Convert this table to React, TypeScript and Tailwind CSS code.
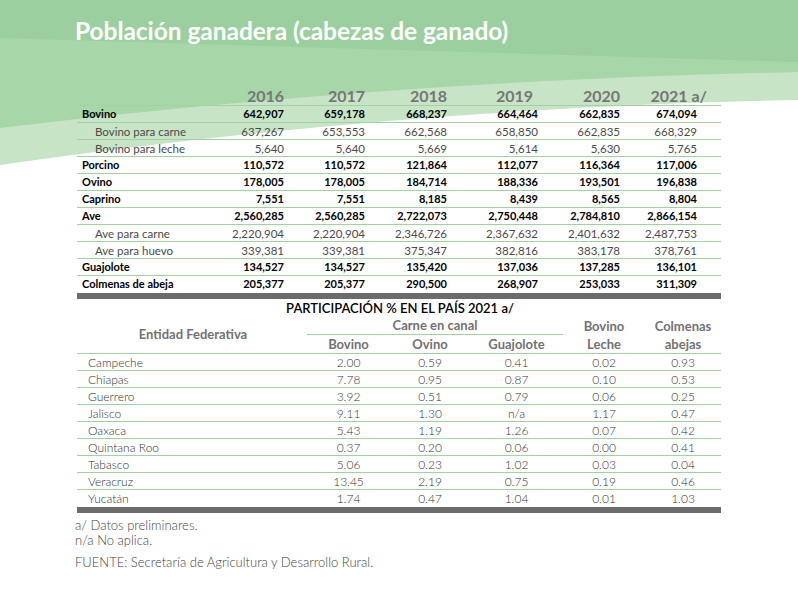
import React from 'react'

const YEARS = ['2016', '2017', '2018', '2019', '2020', '2021 a/']

type Row = { label: string; sub?: boolean; v: string[] }

const POB: Row[] = [
  { label: 'Bovino', v: ['642,907', '659,178', '668,237', '664,464', '662,835', '674,094'] },
  { label: 'Bovino para carne', sub: true, v: ['637,267', '653,553', '662,568', '658,850', '662,835', '668,329'] },
  { label: 'Bovino para leche', sub: true, v: ['5,640', '5,640', '5,669', '5,614', '5,630', '5,765'] },
  { label: 'Porcino', v: ['110,572', '110,572', '121,864', '112,077', '116,364', '117,006'] },
  { label: 'Ovino', v: ['178,005', '178,005', '184,714', '188,336', '193,501', '196,838'] },
  { label: 'Caprino', v: ['7,551', '7,551', '8,185', '8,439', '8,565', '8,804'] },
  { label: 'Ave', v: ['2,560,285', '2,560,285', '2,722,073', '2,750,448', '2,784,810', '2,866,154'] },
  { label: 'Ave para carne', sub: true, v: ['2,220,904', '2,220,904', '2,346,726', '2,367,632', '2,401,632', '2,487,753'] },
  { label: 'Ave para huevo', sub: true, v: ['339,381', '339,381', '375,347', '382,816', '383,178', '378,761'] },
  { label: 'Guajolote', v: ['134,527', '134,527', '135,420', '137,036', '137,285', '136,101'] },
  { label: 'Colmenas de abeja', v: ['205,377', '205,377', '290,500', '268,907', '253,033', '311,309'] },
]

const PART: [string, string, string, string, string, string][] = [
  ['Campeche', '2.00', '0.59', '0.41', '0.02', '0.93'],
  ['Chiapas', '7.78', '0.95', '0.87', '0.10', '0.53'],
  ['Guerrero', '3.92', '0.51', '0.79', '0.06', '0.25'],
  ['Jalisco', '9.11', '1.30', 'n/a', '1.17', '0.47'],
  ['Oaxaca', '5.43', '1.19', '1.26', '0.07', '0.42'],
  ['Quintana Roo', '0.37', '0.20', '0.06', '0.00', '0.41'],
  ['Tabasco', '5.06', '0.23', '1.02', '0.03', '0.04'],
  ['Veracruz', '13.45', '2.19', '0.75', '0.19', '0.46'],
  ['Yucatán', '1.74', '0.47', '1.04', '0.01', '1.03'],
]

const cols1 = 'grid grid-cols-[150px_57px_81px_82px_91px_82px_77px_24px]'
const cols2 = 'grid grid-cols-[230px_83px_80px_93px_82px_76px]'

function Backdrop() {
  return (
    <svg className="absolute top-0 left-0" width="798" height="200" viewBox="0 0 798 200">
      <path d="M0 0 H798 V100 Q400 107.5 0 165 Z" fill="#c7e4c6" />
      <path d="M0 0 H798 V72 Q400 80 0 128 Z" fill="#a7d6a8" />
      <path d="M0 0 H798 V62 L0 38 Z" fill="#9ccf9f" />
    </svg>
  )
}

export default function App() {
  return (
    <div className="relative w-[798px] h-[591px] bg-white overflow-hidden font-['Lato',sans-serif]">
      <Backdrop />
      <div className="relative pl-[77px] pt-[15px]">
        <h1 className="-ml-[2px] text-white font-bold text-[24.5px] leading-[32px] tracking-[-0.05px]">
          Población ganadera (cabezas de ganado)
        </h1>

        <div className="w-[644px] mt-[39px]">
          <div className={`${cols1} h-[20px] items-center border-b border-[#a3d1a3] text-[16px] font-bold text-[#767676]`}>
            <div />
            {YEARS.map((y, i) => (
              <div key={y} className={`text-right leading-none ${i === 5 ? '-mr-[10px]' : ''} ${i === 3 ? 'pr-[5px]' : ''}`}>
                {y}
              </div>
            ))}
            <div />
          </div>
          {POB.map((r, ri) => (
            <div
              key={r.label}
              className={`${cols1} h-[17px] items-center ${ri < POB.length - 1 ? 'border-b border-[#a3d1a3]' : ''} ${r.sub ? 'text-[#4a4a4a] font-normal text-[11.5px]' : 'text-black font-bold text-[11px]'}`}
            >
              <div className={r.sub ? 'pl-[18px]' : 'pl-[5px]'}>{r.label}</div>
              {r.v.map((v, i) => (
                <div key={i} className="text-right">{v}</div>
              ))}
              <div />
            </div>
          ))}
          <div className="h-[6px] bg-[#6b6b6b]" />

          <div className="text-center text-[13px] font-semibold text-black leading-[17px] mt-[1px] pl-[2px]">
            PARTICIPACIÓN % EN EL PAÍS 2021 a/
          </div>
          <div className={`${cols2} text-[13px] font-bold text-[#727272] border-b border-[#a3d1a3]`}>
            <div className="flex items-center justify-center h-[36px] pl-[2px]">Entidad Federativa</div>
            <div className="col-span-3 flex flex-col">
              <div className="h-[18px] flex items-center justify-center border-b border-[#a3d1a3] leading-none">Carne en canal</div>
              <div className="grid grid-cols-[83px_80px_93px] h-[18px] items-center text-center leading-none">
                <div>Bovino</div>
                <div>Ovino</div>
                <div>Guajolote</div>
              </div>
            </div>
            <div className="flex flex-col items-center justify-center leading-[18px]">
              <div>Bovino</div>
              <div>Leche</div>
            </div>
            <div className="flex flex-col items-center justify-center leading-[18px]">
              <div>Colmenas</div>
              <div>abejas</div>
            </div>
          </div>
          {PART.map((r, ri) => (
            <div
              key={r[0]}
              className={`${cols2} h-[17px] items-center text-[12px] font-light text-[#333] ${ri < PART.length - 1 ? 'border-b border-[#a3d1a3]' : ''}`}
            >
              <div className="pl-[11px]">{r[0]}</div>
              {r.slice(1).map((v, i) => (
                <div key={i} className="text-center">{v}</div>
              ))}
            </div>
          ))}
          <div className="h-[6px] bg-[#6b6b6b]" />
        </div>

        <div className="-ml-[2px] mt-[5px] text-[13px] font-light text-[#444] leading-[15px]">
          <div>a/ Datos preliminares.</div>
          <div>n/a No aplica.</div>
          <div className="mt-[7px]">FUENTE: Secretaría de Agricultura y Desarrollo Rural.</div>
        </div>
      </div>
    </div>
  )
}
